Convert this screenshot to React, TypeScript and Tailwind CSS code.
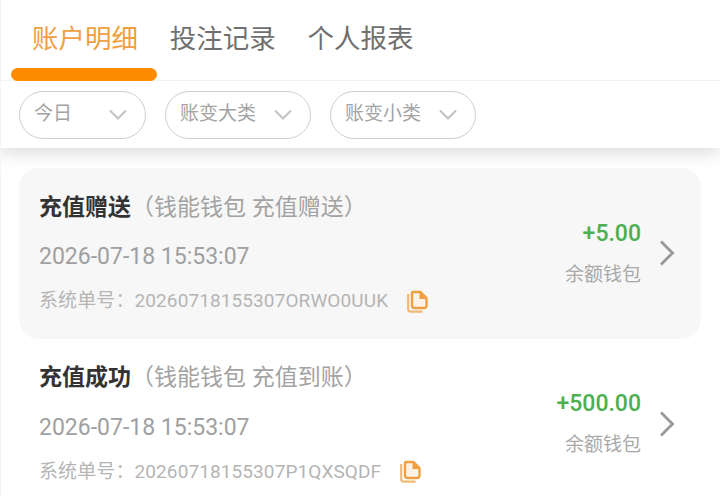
const cjk = `font-['Roboto','Noto_Sans_CJK_SC',sans-serif]`;

const ChevronDown = () => (
  <svg width="18" height="12" viewBox="0 0 18 12" fill="none" stroke="#c4c4c4" strokeWidth="2.2">
    <path d="M1 1.5 L9 9.5 L17 1.5" />
  </svg>
);

const ChevronRight = () => (
  <svg width="18" height="28" viewBox="0 0 18 28" fill="none" stroke="#999999" strokeWidth="2.8">
    <path d="M3 2.5 L14.5 14 L3 25.5" />
  </svg>
);

const CopyIcon = () => (
  <svg width="22" height="23" viewBox="0 0 22 23" fill="none">
    <path d="M2.2 4 V19 Q2.2 21.6 4.8 21.6 H16.5" stroke="#f0a654" strokeWidth="2.2" opacity="0.8" />
    <path
      d="M6.5 2 H14.5 L20.5 8 V15.5 Q20.5 18 18 18 H8.5 Q6 18 6 15.5 V2.5 Z"
      fill="#fdf3e4"
      stroke="#f0a040"
      strokeWidth="2.4"
      strokeLinejoin="round"
    />
    <path d="M13.5 1.5 L21 9 H13.5 Z" fill="#f0a040" />
  </svg>
);

const Filter = ({ label, width }: { label: string; width: string }) => (
  <div
    className={`flex h-12 items-center justify-between rounded-full border border-[#cfcfcf] pr-[18px] pl-[14px] text-[19px] text-[#a3a3a3] ${width}`}
  >
    <span className="-mt-[1px]">{label}</span>
    <ChevronDown />
  </div>
);

const Record = ({
  title,
  sub,
  time,
  order,
  amount,
  active,
}: {
  title: string;
  sub: string;
  time: string;
  order: string;
  amount: string;
  active?: boolean;
}) => (
  <div
    className={`flex h-[170.5px] items-center justify-between rounded-[20px] pr-[25px] pl-[20px] ${active ? "bg-[#f7f7f7]" : ""}`}
  >
    <div className="flex flex-col">
      <p className="text-[23px] leading-[32px] text-[#a3a3a3]">
        <span className="font-bold text-[#333333]">{title}</span>
        {sub}
      </p>
      <p className="mt-[17.5px] text-[23px] leading-[32px] text-[#a0a0a0]">{time}</p>
      <div className="mt-[14px] flex items-center gap-[18px] text-[19px] leading-[28px] tracking-[0.1px] text-[#b5b5b5]">
        <span>系统单号：{order}</span>
        <CopyIcon />
      </div>
    </div>
    <div className="flex items-center gap-[17px]">
      <div className="flex flex-col items-end">
        <p className="text-[23px] leading-[32px] font-medium text-[#4caf50]">{amount}</p>
        <p className="mt-[11px] text-[19px] leading-[28px] text-[#a8a8a8]">余额钱包</p>
      </div>
      <ChevronRight />
    </div>
  </div>
);

export default function App() {
  return (
    <div className={`relative h-[496px] w-[720px] overflow-hidden bg-white ${cjk}`}>
      <div className="relative z-10 h-[148px] bg-white shadow-[0_6px_16px_rgba(0,0,0,0.13)]">
        <div className="relative flex h-[81px] gap-[31.8px] border-b border-[#f2f2f2] pt-[21px] pl-[32px] text-[26.5px] leading-[36px] text-[#707070]">
          <span className="text-[#f0a040]">账户明细</span>
          <span>投注记录</span>
          <span>个人报表</span>
          <div className="absolute top-[68px] left-[11px] h-[13px] w-[146px] rounded-full bg-[#ff8c00]" />
        </div>
        <div className="flex gap-[19px] pt-[10px] pl-[19px]">
          <Filter label="今日" width="w-[127px]" />
          <Filter label="账变大类" width="w-[146px]" />
          <Filter label="账变小类" width="w-[146px]" />
        </div>
      </div>
      <div className="px-[19px] pt-[20px]">
        <Record
          active
          title="充值赠送"
          sub="（钱能钱包 充值赠送）"
          time="2026-07-18 15:53:07"
          order="20260718155307ORWO0UUK"
          amount="+5.00"
        />
        <Record
          title="充值成功"
          sub="（钱能钱包 充值到账）"
          time="2026-07-18 15:53:07"
          order="20260718155307P1QXSQDF"
          amount="+500.00"
        />
      </div>
      <div className="absolute inset-y-0 left-0 z-20 w-px bg-[#f5f5f5]" />
    </div>
  );
}
